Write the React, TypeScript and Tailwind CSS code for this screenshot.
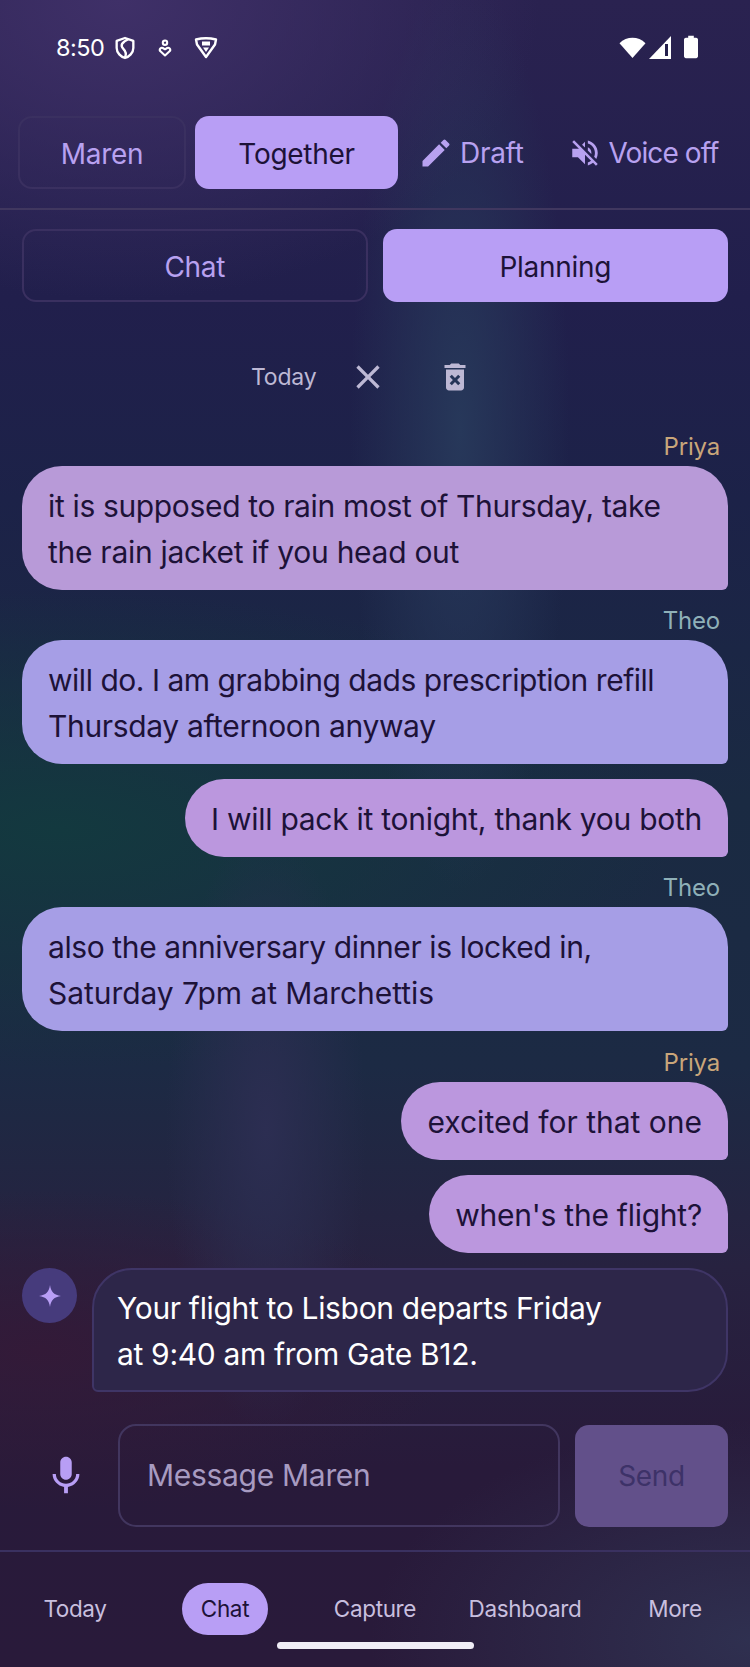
import { MdClose, MdDeleteForever, MdEdit, MdMic, MdVolumeOff } from "react-icons/md";

function StatusBar() {
  return (
    <div className="flex items-start h-[117px] pt-[35px] pl-[56px] pr-[52px] justify-between text-white">
      <div className="flex items-center h-[25px]">
        <span className="text-[23.5px] leading-none tracking-[-0.5px] w-[59px]">8:50</span>
        <svg width="20" height="24" viewBox="0 0 24 28" fill="none" stroke="white" strokeWidth="2.8">
          <path d="M12 2 L22 5.500 V14 C22 20 17 24.500 12 26 C7 24.500 2 20 2 14 V5.500 Z" strokeLinejoin="round" />
          <path d="M16 3.500 C8 7 6 11 10 15 C13 18 14 21 12 25" />
        </svg>
        <svg width="14" height="20" viewBox="0 0 16 20" className="ml-[23px]" fill="none" stroke="white" strokeWidth="2.4">
          <circle cx="8" cy="4" r="2.500" />
          <path d="M8 18.500 L2.500 13.500 C1 11.500 3.500 9 5.500 10 L8 11.500 L10.500 10 C12.500 9 15 11.500 13.500 13.500 Z" strokeLinejoin="round" />
        </svg>
        <svg width="24" height="23" viewBox="0 0 24 22" className="ml-[22px]" fill="none">
          <path d="M2 3 C8 1.500 16 1.500 22 3 L21 8 L12 20.500 L3 8 Z" stroke="white" strokeWidth="2.400" strokeLinejoin="round" />
          <path d="M8 5 H16 V9 H8 Z M9 11 H15 L12 15.500 Z" fill="white" />
        </svg>
      </div>
      <div className="flex items-center h-[24px]">
        <svg width="27" height="23" viewBox="0 0 28 23" fill="white">
          <path d="M14 22.500 L0.500 7 C8 -0.500 20 -0.500 27.500 7 Z" />
        </svg>
        <svg width="22" height="23" viewBox="0 0 22 23" className="ml-[3px]" fill="white">
          <path d="M0 23 L22 0 V23 Z" />
          <path d="M16 8 H19 V20 H16 Z" fill="#241f4c" />
        </svg>
        <svg width="14" height="24" viewBox="0 0 15 24" className="ml-[13px]" fill="white">
          <path d="M4.500 0 H10.500 V2 H13 C14 2 15 3 15 4 V22 C15 23 14 24 13 24 H2 C1 24 0 23 0 22 V4 C0 3 1 2 2 2 H4.500 Z" />
        </svg>
      </div>
    </div>
  );
}

function TopTabs() {
  return (
    <div className="flex items-center h-[93px] pb-[20px] pl-[18px] border-b-2 border-[#40375f] text-[28px] tracking-[-0.3px] text-[#b8a1f0]">
      <div className="w-[168px] h-[73px] pt-[2px] rounded-[14px] border-2 border-[#3a3060] flex items-center justify-center">Maren</div>
      <div className="ml-[9px] w-[203px] h-[73px] pt-[2px] rounded-[14px] bg-[#b89ef5] text-[#1d1238] flex items-center justify-center">Together</div>
      <div className="ml-[20px] flex items-center">
        <MdEdit size={36} />
        <span className="ml-[6px]">Draft</span>
      </div>
      <div className="ml-[44px] flex items-center">
        <MdVolumeOff size={34} />
        <span className="ml-[7px] tracking-[-0.9px]">Voice off</span>
      </div>
    </div>
  );
}

function Segments() {
  return (
    <div className="grid grid-cols-2 gap-[15px] px-[22px] pt-[19px] text-[28px] tracking-[-0.3px]">
      <div className="h-[73px] pt-[2px] rounded-[14px] border-2 border-[#3a3060] text-[#b8a1f0] flex items-center justify-center">Chat</div>
      <div className="h-[73px] pt-[2px] rounded-[14px] bg-[#b89ef5] text-[#1d1238] flex items-center justify-center">Planning</div>
    </div>
  );
}

function DateRow() {
  return (
    <div className="flex items-center h-[56px] mt-[47px] text-[#bdb8d4]">
      <span className="ml-[251px] w-[65px] text-[23px] tracking-[-0.2px]">Today</span>
      <MdClose size={40} className="ml-[32px]" />
      <MdDeleteForever size={36} className="ml-[49px]" />
    </div>
  );
}

type BubbleProps = {
  who?: string;
  whoColor?: string;
  bg: string;
  lines: string[];
  self?: boolean;
  gap: string;
  track?: string;
  track2?: string;
};

function Bubble({ who, whoColor, bg, lines, self, gap, track = "tracking-[-0.35px]", track2 }: BubbleProps) {
  return (
    <div className={`flex flex-col items-end px-[22px] ${gap}`}>
      {who && <div className={`h-[35px] pr-[8px] text-[24px] tracking-[-0.2px] leading-[32px] ${whoColor}`}>{who}</div>}
      <div className={`${self ? "" : "w-full"} ${bg} ${track} rounded-t-[40px] rounded-bl-[40px] rounded-br-[6px] px-[26px] pt-[17px] pb-[15px] text-[30px] leading-[46px] text-[#1d1238]`}>
        {lines.map((l, i) => (
          <div key={l} className={i === 1 ? track2 : undefined}>{l}</div>
        ))}
      </div>
    </div>
  );
}

function Assistant() {
  return (
    <div className="flex gap-[15px] px-[22px] mt-[15px]">
      <div className="w-[55px] h-[55px] rounded-full bg-[#463b7c] flex items-center justify-center shrink-0">
        <svg width="24" height="24" viewBox="0 0 24 24" fill="#b89ef5">
          <path d="M12 1 C13 8 16 11 23 12 C16 13 13 16 12 23 C11 16 8 13 1 12 C8 11 11 8 12 1 Z" />
        </svg>
      </div>
      <div className="flex-1 h-[124px] rounded-t-[40px] rounded-br-[40px] rounded-bl-[6px] border-2 border-[#3f3566] bg-[#2d2649] px-[23px] py-[15px] text-[30px] leading-[46px] text-white tracking-[-0.33px]">
        <div>Your flight to Lisbon departs Friday</div>
        <div>at 9:40 am from Gate B12.</div>
      </div>
    </div>
  );
}

function Composer() {
  return (
    <div className="flex items-center h-[103px] mt-[32px] pr-[22px]">
      <div className="w-[118px] flex justify-center pl-[14px] text-[#b89ef5]">
        <MdMic size={46} />
      </div>
      <div className="w-[442px] h-[103px] rounded-[18px] border-2 border-[#42365f] flex items-center pl-[27px] text-[30px] tracking-[-0.3px] text-[#a79bc1]">
        Message Maren
      </div>
      <div className="ml-[15px] flex-1 h-[102px] rounded-[14px] bg-[#62508a] flex items-center justify-center text-[28px] tracking-[-0.4px] text-[#3d3268]">Send</div>
    </div>
  );
}

function BottomNav() {
  const items = ["Today", "Chat", "Capture", "Dashboard", "More"];
  return (
    <div className="mt-[23px] flex-1 border-t-2 border-[#3a3160] flex flex-col items-center">
      <div className="w-full grid grid-cols-5 mt-[31px] h-[52px] text-[22.5px] tracking-[-0.35px] text-[#c8bfdf]">
        {items.map((i) =>
          i === "Chat" ? (
            <div key={i} className="flex justify-center">
              <span className="w-[86px] rounded-[26px] bg-[#b89ef5] text-[#1d1238] flex items-center justify-center">{i}</span>
            </div>
          ) : (
            <div key={i} className="flex items-center justify-center">{i}</div>
          ),
        )}
      </div>
      <div className="mt-[7px] w-[197px] h-[7px] rounded-full bg-[#f0edf6]" />
    </div>
  );
}

export default function App() {
  return (
    <div className="w-[750px] h-[1667px] overflow-hidden flex flex-col font-['Inter',sans-serif] bg-[radial-gradient(ellipse_420px_300px_at_120px_0px,#3f3068_0%,transparent_100%),radial-gradient(ellipse_110px_460px_at_460px_430px,#27385a_0%,transparent_100%),radial-gradient(ellipse_100px_300px_at_266px_1130px,#2c2e52_0%,transparent_100%),radial-gradient(ellipse_620px_240px_at_60px_830px,#13393f_0%,transparent_100%),radial-gradient(ellipse_380px_220px_at_750px_1640px,#2f3050_0%,transparent_100%),radial-gradient(ellipse_420px_160px_at_40px_1350px,#331a38_0%,transparent_100%),linear-gradient(180deg,#2a2250_0%,#211f4c_18%,#1c2248_30%,#1a2a42_48%,#1c2a44_64%,#272240_76%,#281a3a_88%,#291a3a_100%)]">
      <StatusBar />
      <TopTabs />
      <Segments />
      <DateRow />
      <Bubble who="Priya" whoColor="text-[#c9a67a]" bg="bg-[#b89ad8]" gap="mt-[26px]" track2="tracking-[-0.28px]" lines={["it is supposed to rain most of Thursday, take", "the rain jacket if you head out"]} />
      <Bubble who="Theo" whoColor="text-[#8fb0b8]" bg="bg-[#a69ee6]" gap="mt-[15px]" track="tracking-[-0.48px]" track2="tracking-[-0.35px]" lines={["will do. I am grabbing dads prescription refill", "Thursday afternoon anyway"]} />
      <Bubble bg="bg-[#bb97de]" self gap="mt-[15px]" track="tracking-[-0.27px]" lines={["I will pack it tonight, thank you both"]} />
      <Bubble who="Theo" whoColor="text-[#8fb0b8]" bg="bg-[#a69ee6]" gap="mt-[15px]" track="tracking-[-0.4px]" track2="tracking-[-0.05px]" lines={["also the anniversary dinner is locked in,", "Saturday 7pm at Marchettis"]} />
      <Bubble who="Priya" whoColor="text-[#c9a67a]" bg="bg-[#bb97de]" self gap="mt-[16px]" track="tracking-[0px]" lines={["excited for that one"]} />
      <Bubble bg="bg-[#bb97de]" self gap="mt-[15px]" track="tracking-[-0.25px]" lines={["when's the flight?"]} />
      <Assistant />
      <Composer />
      <BottomNav />
    </div>
  );
}
